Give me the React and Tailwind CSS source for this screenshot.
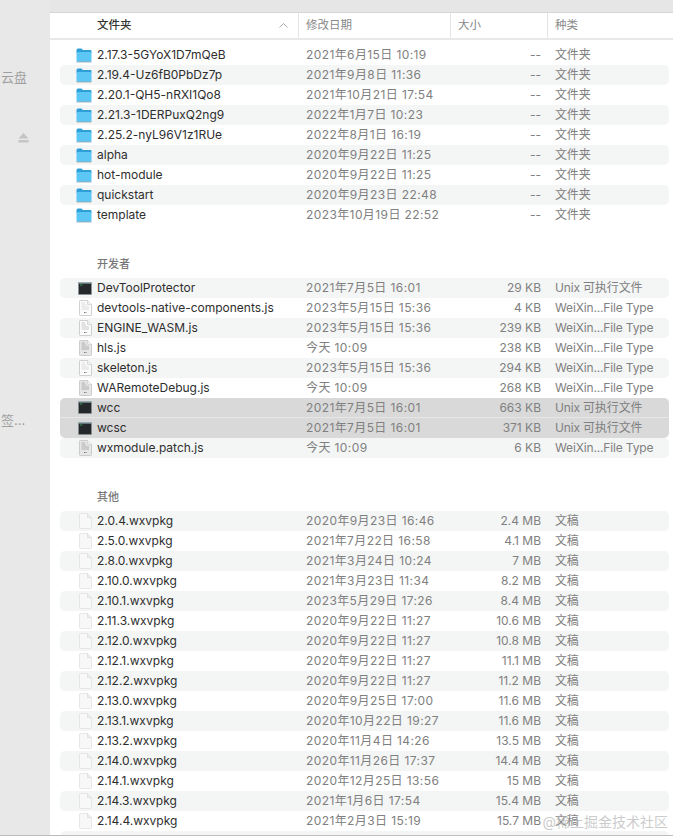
import React from 'react';

const folders = [
    ['2.17.3-5GYoX1D7mQeB', '2021年6月15日 10:19'],
    ['2.19.4-Uz6fB0PbDz7p', '2021年9月8日 11:36'],
    ['2.20.1-QH5-nRXI1Qo8', '2021年10月21日 17:54'],
    ['2.21.3-1DERPuxQ2ng9', '2022年1月7日 10:23'],
    ['2.25.2-nyL96V1z1RUe', '2022年8月1日 16:19'],
    ['alpha', '2020年9月22日 11:25'],
    ['hot-module', '2020年9月22日 11:25'],
    ['quickstart', '2020年9月23日 22:48'],
    ['template', '2023年10月19日 22:52'],
];

const devFiles = [
    ['DevToolProtector', '2021年7月5日 16:01', '29 KB', 'Unix 可执行文件', 'exec'],
    ['devtools-native-components.js', '2023年5月15日 15:36', '4 KB', 'WeiXin...File Type', 'light'],
    ['ENGINE_WASM.js', '2023年5月15日 15:36', '239 KB', 'WeiXin...File Type', 'mid'],
    ['hls.js', '今天 10:09', '238 KB', 'WeiXin...File Type', 'dark'],
    ['skeleton.js', '2023年5月15日 15:36', '294 KB', 'WeiXin...File Type', 'light'],
    ['WARemoteDebug.js', '今天 10:09', '268 KB', 'WeiXin...File Type', 'dark'],
    ['wcc', '2021年7月5日 16:01', '663 KB', 'Unix 可执行文件', 'exec'],
    ['wcsc', '2021年7月5日 16:01', '371 KB', 'Unix 可执行文件', 'exec'],
    ['wxmodule.patch.js', '今天 10:09', '6 KB', 'WeiXin...File Type', 'dark'],
];

const others = [
    ['2.0.4.wxvpkg', '2020年9月23日 16:46', '2.4 MB'],
    ['2.5.0.wxvpkg', '2021年7月22日 16:58', '4.1 MB'],
    ['2.8.0.wxvpkg', '2021年3月24日 10:24', '7 MB'],
    ['2.10.0.wxvpkg', '2021年3月23日 11:34', '8.2 MB'],
    ['2.10.1.wxvpkg', '2023年5月29日 17:26', '8.4 MB'],
    ['2.11.3.wxvpkg', '2020年9月22日 11:27', '10.6 MB'],
    ['2.12.0.wxvpkg', '2020年9月22日 11:27', '10.8 MB'],
    ['2.12.1.wxvpkg', '2020年9月22日 11:27', '11.1 MB'],
    ['2.12.2.wxvpkg', '2020年9月22日 11:27', '11.2 MB'],
    ['2.13.0.wxvpkg', '2020年9月25日 17:00', '11.6 MB'],
    ['2.13.1.wxvpkg', '2020年10月22日 19:27', '11.6 MB'],
    ['2.13.2.wxvpkg', '2020年11月4日 14:26', '13.5 MB'],
    ['2.14.0.wxvpkg', '2020年11月26日 17:37', '14.4 MB'],
    ['2.14.1.wxvpkg', '2020年12月25日 13:56', '15 MB'],
    ['2.14.3.wxvpkg', '2021年1月6日 17:54', '15.4 MB'],
    ['2.14.4.wxvpkg', '2021年2月3日 15:19', '15.7 MB'],
];

function FolderIcon() {
    return (
        <svg width="16" height="15" viewBox="0 0 16 15">
            <path d="M0.5 2 Q0.5 0.5 2 0.5 H5.5 L7 2 H14.5 Q15.5 2 15.5 3 V5 H0.5 Z" fill="#2f9fd8" />
            <path d="M0.5 4 H15.5 V13 Q15.5 14 14.5 14 H1.5 Q0.5 14 0.5 13 Z" fill="#5cc6f5" />
            <path d="M0.5 14 H15.5" stroke="#9aa4aa" strokeWidth="0.8" />
        </svg>
    );
}

function ExecIcon() {
    return (
        <svg width="14" height="13" viewBox="0 0 14 13">
            <rect x="0.5" y="0.5" width="13" height="12" fill="#25282a" stroke="#8b9498" strokeWidth="0.5" />
            <rect x="0.5" y="0.5" width="13" height="1" fill="#a9c7cf" />
            <path d="M2 3 H5" stroke="#4fd07a" strokeWidth="0.8" strokeDasharray="1 0.5" />
        </svg>
    );
}

function DocIcon({ tone }) {
    const lines = tone === 'light' ? '#d8d8d8' : tone === 'mid' ? '#c4c4c4' : '#a9a9a9';
    const fill = tone === 'dark' ? '#e6e6e6' : '#fbfbfb';
    return (
        <svg width="13" height="16" viewBox="0 0 13 16">
            <path d="M0.5 1.2 Q0.5 0.5 1.2 0.5 H8.5 L12.5 4.5 V14.8 Q12.5 15.5 11.8 15.5 H1.2 Q0.5 15.5 0.5 14.8 Z" fill={fill} stroke="#bdbdbd" strokeWidth="0.7" />
            <path d="M8.5 0.5 V4.5 H12.5" fill="#f2f2f2" stroke="#c8c8c8" strokeWidth="0.6" />
            <path d="M2.5 3 H6 M2.5 5 H7 M2.5 7 H10 M2.5 9 H10" stroke={lines} strokeWidth="0.9" />
            <path d="M5 12.5 H8" stroke="#777" strokeWidth="1.2" strokeDasharray="1 0.5" />
        </svg>
    );
}

function PkgIcon() {
    return (
        <svg width="13" height="16" viewBox="0 0 13 16">
            <path d="M0.5 1.2 Q0.5 0.5 1.2 0.5 H8.5 L12.5 4.5 V14.8 Q12.5 15.5 11.8 15.5 H1.2 Q0.5 15.5 0.5 14.8 Z" fill="#f8f8f8" stroke="#dedede" strokeWidth="0.7" />
            <path d="M8.5 0.5 V4.5 H12.5" fill="#ececec" stroke="#d8d8d8" strokeWidth="0.6" />
        </svg>
    );
}

function Row({ icon, name, date, size, kind, striped, selected, joinNext, joinPrev }) {
    let bg = striped ? 'bg-[#f4f5f5] rounded-[5px]' : '';
    if (selected) {
        bg = 'bg-[#d9d9d9] ' + (joinNext ? 'rounded-t-[5px] border-b border-[#e6e6e6]' : '') + (joinPrev ? 'rounded-b-[5px]' : '');
    }
    return (
        <div className={'flex items-center h-5 text-[12px] leading-5 ' + bg}>
            <div className="w-[37px] flex justify-end shrink-0 pr-[5px]">{icon}</div>
            <div className="w-[209px] shrink-0 text-[#2e2e2e] whitespace-nowrap">{name}</div>
            <div className="w-[145px] shrink-0 text-[#808080] tracking-[0.4px] whitespace-nowrap">{date}</div>
            <div className="w-[90px] shrink-0 text-right text-[#808080] whitespace-nowrap">{size}</div>
            <div className="pl-[14px] text-[#808080] tracking-[-0.15px] whitespace-nowrap">{kind}</div>
        </div>
    );
}

function SectionTitle({ children }) {
    return <div className="h-[14px] leading-[14px] pl-[37px] text-[11px] font-medium text-[#777777]">{children}</div>;
}

export default function App() {
    return (
        <div className="relative flex w-[673px] h-[836px] overflow-hidden bg-white font-['Inter','Noto_Sans_CJK_SC',sans-serif]">
            <div className="w-[50px] shrink-0 bg-[#e8e8e8] text-[#a0a0a0] text-[13px]">
                <div className="pt-[68px] pl-[1px] h-[133px]">云盘</div>
                <div className="pl-[18px] h-[280px]">
                    <svg width="11" height="10" viewBox="0 0 11 10">
                        <path d="M5.5 0 L10.5 5.5 H0.5 Z M0.5 7 H10.5 V9.5 H0.5 Z" fill="#c4c4c4" />
                    </svg>
                </div>
                <div className="pl-[1px] -mt-[2px]">签...</div>
            </div>

            <div className="flex-1 min-w-0 flex flex-col">
                <div className="h-[13px] shrink-0 bg-[#e6e6e6] border-b border-[#d6d6d6]"></div>
                <div className="h-[27px] shrink-0 flex items-center border-b-2 border-[#e8e8e8] text-[11.5px]">
                    <div className="w-[249px] h-full flex items-center justify-between pl-[47px] pr-[10px] font-medium text-[#333333] border-r border-[#e4e4e4]">
                        <span>文件夹</span>
                        <svg width="9" height="5" viewBox="0 0 9 5">
                            <path d="M0.5 4.5 L4.5 0.5 L8.5 4.5" fill="none" stroke="#a8a8a8" strokeWidth="1" />
                        </svg>
                    </div>
                    <div className="w-[152px] h-full flex items-center pl-[7px] text-[#888888] border-r border-[#e4e4e4]">修改日期</div>
                    <div className="w-[97px] h-full flex items-center pl-[7px] text-[#888888] border-r border-[#e4e4e4]">大小</div>
                    <div className="pl-[7px] text-[#888888]">种类</div>
                </div>

                <div className="pl-[10px] pr-[4px] pt-[5px]">
                    {folders.map((f, i) => (
                        <Row key={f[0]} icon={<FolderIcon />} name={f[0]} date={f[1]} size="--" kind="文件夹" striped={i % 2 === 1} />
                    ))}

                    <div className="mt-[32px] mb-[7px]">
                        <SectionTitle>开发者</SectionTitle>
                    </div>
                    {devFiles.map((f, i) => (
                        <Row
                            key={f[0]}
                            icon={f[4] === 'exec' ? <ExecIcon /> : <DocIcon tone={f[4]} />}
                            name={f[0]}
                            date={f[1]}
                            size={f[2]}
                            kind={f[3]}
                            striped={i % 2 === 0}
                            selected={f[0] === 'wcc' || f[0] === 'wcsc'}
                            joinNext={f[0] === 'wcc'}
                            joinPrev={f[0] === 'wcsc'}
                        />
                    ))}

                    <div className="mt-[32px] mb-[7px]">
                        <SectionTitle>其他</SectionTitle>
                    </div>
                    {others.map((f, i) => (
                        <Row key={f[0]} icon={<PkgIcon />} name={f[0]} date={f[1]} size={f[2]} kind="文稿" striped={i % 2 === 0} />
                    ))}
                    <div className="h-5 bg-[#f4f5f5] rounded-[5px]"></div>
                </div>
            </div>

            <div className="absolute left-0 right-0 bottom-0 h-px bg-[#bdbdbd]"></div>
            <div className="absolute right-[5px] bottom-[4px] text-[14px] leading-5 text-[#b4b4b4]/70 whitespace-nowrap">@稀土掘金技术社区</div>
        </div>
    );
}
